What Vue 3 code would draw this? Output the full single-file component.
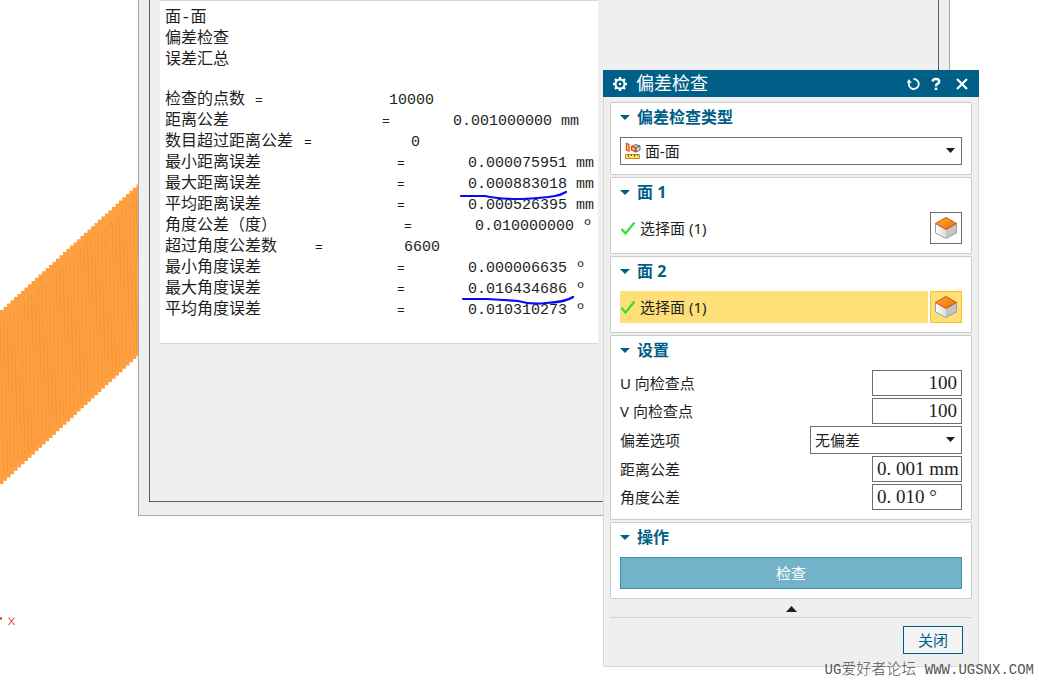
<script setup>
import { ref } from 'vue'

const reportRows = [
  { label: '检查的点数', eq: 90, at: 134, value: '10000' },
  { label: '距离公差', eq: 217, at: 71, value: '0.001000000', unit: 'mm' },
  { label: '数目超过距离公差', eq: 139, at: 107, value: '0' },
  { label: '最小距离误差', eq: 232, at: 71, value: '0.000075951', unit: 'mm' },
  { label: '最大距离误差', eq: 232, at: 71, value: '0.000883018', unit: 'mm' },
  { label: '平均距离误差', eq: 232, at: 71, value: '0.000526395', unit: 'mm' },
  { label: '角度公差（度）', eq: 239, at: 71, value: '0.010000000', unit: 'º' },
  { label: '超过角度公差数', eq: 150, at: 89, value: '6600' },
  { label: '最小角度误差', eq: 232, at: 71, value: '0.000006635', unit: 'º' },
  { label: '最大角度误差', eq: 232, at: 71, value: '0.016434686', unit: 'º' },
  { label: '平均角度误差', eq: 232, at: 71, value: '0.010310273', unit: 'º' }
]

const columnsOf = (row) => ({ gridTemplateColumns: `${row.eq}px ${row.at}px 1fr` })

// Facetted face: one narrow strip per step along the sloping edges
const strips = Array.from({ length: 40 }, (_, i) => {
  const x = i * 3.5
  return { x, top: 127 - x * 0.92, bottom: 301 - x * 0.94 }
})
const facePath =
  'M0 127' +
  strips.map((s) => `L${s.x} ${s.top}H${s.x + 3.5}`).join('') +
  [...strips].reverse().map((s) => `L${s.x + 3.5} ${s.bottom}H${s.x}`).join('') +
  'Z'

const type = ref('面-面')
const deviation = ref('无偏差')
const uPoints = ref('100')
const vPoints = ref('100')
const distTol = ref('0. 001 mm')
const angleTol = ref('0. 010 °')
</script>

<template>
  <main class="desktop">
    <svg class="model" width="138" height="302" viewBox="0 0 138 302" aria-hidden="true">
      <path :d="facePath" fill="#ffa040" />
      <line
        v-for="s in strips"
        :key="s.x"
        :x1="s.x"
        :y1="s.top + 14"
        :x2="s.x + 4"
        :y2="s.bottom - 10"
        stroke="#ee9238"
        stroke-width="1"
        stroke-dasharray="7 1"
        opacity="0.75"
      />
    </svg>
    <svg class="axis" width="18" height="12" viewBox="0 0 18 12" aria-hidden="true">
      <path d="M0 2.5h2" stroke="#c81e28" stroke-width="2" />
      <path d="M8.500 1.500l6 7.500M14.500 1.500l-6 7.500" stroke="#d6545a" stroke-width="1.200" fill="none" />
    </svg>

    <section class="report">
      <div class="report-inner">
        <div class="paper">
          <p>面-面</p>
          <p>偏差检查</p>
          <p>误差汇总</p>
          <div class="blank"></div>
          <div v-for="row in reportRows" :key="row.label" class="line" :style="columnsOf(row)">
            <span>{{ row.label }}</span>
            <span class="eq">=</span>
            <span class="num">{{ row.value }}{{ row.unit ? ' ' + row.unit : '' }}</span>
          </div>
          <svg class="ink" width="120" height="120" viewBox="0 0 120 120" aria-hidden="true">
            <path d="M3 9h24q12 3 36 3q22-1 34-3q6-1 11-4" />
            <path d="M5 112h24q18 1 31 2q14 4 28 2q20-1 27-6" />
          </svg>
        </div>
      </div>
    </section>

    <section class="dialog">
      <header class="title">
        <svg width="16" height="16" viewBox="0 0 16 16" aria-hidden="true">
          <circle cx="8" cy="8" r="4.500" fill="none" stroke="#fff" stroke-width="2" />
          <circle cx="8" cy="8" r="1.200" fill="#fff" />
          <path d="M8 1v2M8 13v2M1 8h2M13 8h2M3 3l1.500 1.500M11.500 11.500l1.500 1.500M13 3l-1.500 1.500M4.500 11.500L3 13" stroke="#fff" stroke-width="2.400" />
        </svg>
        <h1>偏差检查</h1>
        <button type="button" aria-label="重置">
          <svg width="14" height="14" viewBox="0 0 14 14">
            <path d="M6.500 2A5 5 0 1 1 2.200 5" fill="none" stroke="#fff" stroke-width="1.800" />
            <path d="M0 6L1.500 2L5 5.500Z" fill="#fff" />
          </svg>
        </button>
        <button type="button" aria-label="帮助">
          <svg width="14" height="14" viewBox="0 0 14 14">
            <path d="M3.800 4.500Q3.800 2 7 2Q10.200 2 10.200 4.400Q10.200 6 8 7Q7 7.600 7 9.200" fill="none" stroke="#fff" stroke-width="2.400" />
            <path d="M5.700 10.600h2.600v2.400h-2.600z" fill="#fff" />
          </svg>
        </button>
        <button type="button" class="close-x" aria-label="关闭窗口">
          <svg width="14" height="14" viewBox="0 0 14 14">
            <path d="M2 2l10 10M12 2L2 12" stroke="#fff" stroke-width="2.200" />
          </svg>
        </button>
      </header>

      <div class="body">
        <section class="group">
          <h2>偏差检查类型</h2>
          <div class="select type">
            <svg class="type-icon" width="18" height="18" viewBox="0 0 18 18" aria-hidden="true">
              <path d="M2.500 1.500l2.500 1v6.500l-2.500-1z" fill="#ffe070" stroke="#f04020" stroke-width="1.300" />
              <path d="M8 4l4-1.500 4 1.500v4l-4 2-4-2z" fill="#ddd" stroke="#666" />
              <path d="M7.500 4.500l4 1v4l-4-1.500z" fill="#ffd050" stroke="#f04020" stroke-width="1.300" />
              <path d="M12 5.500l4-1.500M12 5.500v4" stroke="#555" fill="none" />
              <path d="M1.500 12.500h14v4h-14z" fill="#ffe46a" stroke="#c48a20" />
              <path d="M4.500 12v3M7.500 12v2M10.500 12v3M13.500 12v2" stroke="#8a5a10" />
            </svg>
            <select v-model="type" aria-label="偏差检查类型">
              <option>面-面</option>
            </select>
            <svg class="arrow" width="9" height="5" viewBox="0 0 9 5" aria-hidden="true"><path d="M0 0h9L4.500 5z" fill="#1e1e1e" /></svg>
          </div>
        </section>

        <section v-for="n in 2" :key="n" class="group">
          <h2>面 {{ n }}</h2>
          <div class="pick" :class="{ active: n === 2 }">
            <div class="pick-label">
              <svg width="16" height="16" viewBox="0 0 16 16" aria-hidden="true">
                <path d="M1.500 9l4 4.500L14.500 2.500" fill="none" stroke="#2ee03a" stroke-width="2.200" />
              </svg>
              <span>选择面 (1)</span>
            </div>
            <button type="button" class="face" :aria-label="'选择面 ' + n">
              <svg width="24" height="24" viewBox="0 0 24 24">
                <defs>
                  <linearGradient :id="'top' + n" x1="0" y1="0" x2="1" y2="1">
                    <stop offset="0" stop-color="#ffb02a" />
                    <stop offset="1" stop-color="#e86a08" />
                  </linearGradient>
                  <linearGradient :id="'left' + n" x1="0" y1="0" x2="1" y2="0">
                    <stop offset="0" stop-color="#fff" />
                    <stop offset="1" stop-color="#dcdcdc" />
                  </linearGradient>
                </defs>
                <path d="M1.500 7.500L12 13.500V22.500L1.500 17z" :fill="`url(#left${n})`" />
                <path d="M22.500 7.500L12 13.500V22.500L22.500 17z" fill="#c4c4c4" />
                <path d="M1.500 7.500V17L12 22.500L22.500 17V7.500" fill="none" stroke="#a0a0a0" />
                <path d="M12 1.500L22.500 7.500L12 13.500L1.500 7.500z" :fill="`url(#top${n})`" stroke="#c8500c" />
              </svg>
            </button>
          </div>
        </section>

        <section class="group">
          <h2>设置</h2>
          <div class="fields">
            <div class="field">
              <label for="u">U 向检查点</label>
              <input id="u" v-model="uPoints" class="count" type="text" />
            </div>
            <div class="field">
              <label for="v">V 向检查点</label>
              <input id="v" v-model="vPoints" class="count" type="text" />
            </div>
            <div class="field">
              <label for="dev">偏差选项</label>
              <div class="select option">
                <select id="dev" v-model="deviation">
                  <option>无偏差</option>
                </select>
                <svg class="arrow" width="9" height="5" viewBox="0 0 9 5" aria-hidden="true"><path d="M0 0h9L4.500 5z" fill="#1e1e1e" /></svg>
              </div>
            </div>
            <div class="field">
              <label for="dist">距离公差</label>
              <input id="dist" v-model="distTol" type="text" />
            </div>
            <div class="field">
              <label for="angle">角度公差</label>
              <input id="angle" v-model="angleTol" type="text" />
            </div>
          </div>
        </section>

        <section class="group">
          <h2>操作</h2>
          <button type="button" class="check">检查</button>
        </section>

        <button type="button" class="collapse" aria-label="收起">
          <svg width="11" height="6" viewBox="0 0 11 6"><path d="M0 6h11L5.500 0z" fill="#1e1e1e" /></svg>
        </button>
        <footer>
          <button type="button" class="close">关闭</button>
        </footer>
      </div>
    </section>

    <p class="watermark"><span class="latin">UG</span>爱好者论坛<span class="latin"> WWW.UGSNX.COM</span></p>
  </main>
</template>

<style>
body {
  background: #fff;
}
</style>

<style scoped>
.desktop {
  position: relative;
  min-height: 100vh;
  overflow: hidden;
  font-family: "Noto Sans", "Noto Sans CJK SC", sans-serif;
  font-size: 15px;
  color: #1e1e1e;
}
* {
  box-sizing: border-box;
}
h1, h2, p {
  margin: 0;
}
button {
  font: inherit;
  padding: 0;
  border: 0;
  background: none;
}
svg {
  display: block;
}
.model {
  position: absolute;
  left: 0;
  top: 183px;
}
.axis {
  position: absolute;
  left: 0;
  top: 616px;
}

.report {
  position: absolute;
  top: 0;
  bottom: 166px;
  left: 138px;
  right: 89px;
  padding: 0 10px 13px;
  background: #efefef;
  border: 1px solid #a8a8a8;
  border-top: 0;
}
.report-inner {
  height: 100%;
  padding-left: 10px;
  border: 1px solid #5c5c5c;
  border-top: 0;
}
.paper {
  position: relative;
  margin-right: 340px;
  padding: 7px 0 22px 5px;
  background: #fff;
  border-top: 1px solid #d8d8d8;
  border-bottom: 1px solid #d8d8d8;
  font-family: "Liberation Mono", "Noto Sans CJK SC", monospace;
  font-size: 16px;
  line-height: 21px;
  white-space: pre;
}
.paper p {
  height: 21px;
}
.blank {
  height: 19px;
}
.line {
  display: grid;
  height: 21px;
}
.eq {
  font-size: 13px;
}
.num {
  font-size: 15px;
}
.ink {
  position: absolute;
  left: 298px;
  top: 186px;
}
.ink path {
  fill: none;
  stroke: #0a0af0;
  stroke-width: 2.2px;
  stroke-linecap: round;
}

.dialog {
  position: absolute;
  top: 70px;
  left: 603px;
  right: 60px;
  background: #efefef;
}
.title {
  display: flex;
  align-items: center;
  gap: 8px;
  height: 27px;
  padding: 0 10px 0 9px;
  background: #005f87;
  color: #fff;
}
.title h1 {
  flex: 1;
  font-size: 18px;
  font-weight: 400;
  line-height: 27px;
}
.title .close-x {
  margin-left: 4px;
}
.body {
  display: flex;
  flex-direction: column;
  gap: 2px;
  padding: 5px 6px 12px;
  border: 1px solid #d8d8d8;
  border-top: 0;
}
.group {
  padding: 0 9px 9px;
  background: #fff;
  border: 1px solid #cdcdcd;
  border-radius: 1px;
}
.group h2 {
  display: flex;
  align-items: center;
  gap: 7px;
  height: 26px;
  margin-bottom: 8px;
  font-size: 16px;
  font-weight: 700;
  color: #005f87;
  white-space: pre;
}
.group h2::before {
  content: "";
  margin-top: 2px;
  border: 5px solid transparent;
  border-top-color: #005f87;
  border-bottom: 0;
}
.select {
  position: relative;
}
select {
  display: block;
  width: 100%;
  height: 28px;
  padding: 0 20px 0 4px;
  appearance: none;
  border: 1px solid #6e6e6e;
  border-radius: 0;
  background: #fff;
  color: inherit;
  font: inherit;
}
.type select {
  padding-left: 24px;
}
.type-icon {
  position: absolute;
  left: 4px;
  top: 5px;
}
.arrow {
  position: absolute;
  right: 7px;
  top: 11px;
}
.pick {
  display: flex;
  gap: 2px;
}
.pick-label {
  flex: 1;
  display: flex;
  align-items: center;
  gap: 4px;
  height: 32px;
}
.pick-label span,
.field label {
  padding-bottom: 2px;
}
.active .pick-label {
  background: #ffe078;
}
.face {
  display: grid;
  place-items: center;
  width: 32px;
  height: 32px;
  border: 1px solid #6e6e6e;
  background: #fff;
}
.active .face {
  border-color: #ffc020;
  background: #ffe078;
}
.fields {
  display: grid;
  gap: 2px;
}
.field {
  display: flex;
  align-items: center;
  justify-content: space-between;
}
input {
  width: 90px;
  height: 26px;
  padding: 0 0 0 4px;
  border: 1px solid #6e6e6e;
  border-radius: 0;
  color: inherit;
  font-family: "Liberation Serif", serif;
  font-size: 19px;
}
.count {
  padding: 0 4px;
  text-align: right;
}
.option {
  width: 152px;
}
.check {
  width: 100%;
  height: 32px;
  padding-bottom: 2px;
  border: 1px solid #3c93b0;
  background: #73b3c9;
  color: #fff;
}
.collapse {
  display: flex;
  justify-content: center;
  padding: 5px 0 3px;
}
footer {
  display: flex;
  justify-content: flex-end;
  padding: 8px 9px 0;
  border-top: 1px solid #d0d0d0;
}
.close {
  width: 60px;
  height: 28px;
  padding-bottom: 2px;
  border: 1px solid #005f87;
  background: #f4f4f4;
  color: #005f87;
}
.watermark {
  position: absolute;
  right: 5px;
  bottom: 2px;
  line-height: 20px;
  font-family: "Noto Sans CJK SC", sans-serif;
  font-weight: 300;
  color: #555;
  white-space: pre;
}
.latin {
  font-family: "Liberation Mono", monospace;
  font-size: 14px;
}
</style>
